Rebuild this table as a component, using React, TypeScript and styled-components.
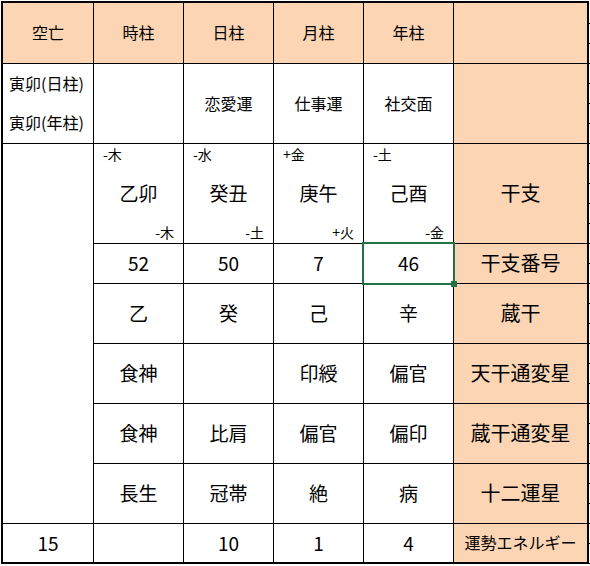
import React from 'react';
import styled, { createGlobalStyle } from 'styled-components';

const GlobalStyle = createGlobalStyle`
  html, body { margin: 0; padding: 0; background: #fff; }
  body {
    font-family: "Noto Sans CJK JP", "Noto Sans", sans-serif;
    color: #000;
  }
`;

const Page = styled.div`
  display: flex;
  align-items: flex-start;
  padding: 1px 0 0 1px;
`;

const Sheet = styled.div`
  display: grid;
  grid-template-columns: 90px 89px 89px 89px 89px 133px;
  grid-template-rows: 60px 79px 99px 39px 59px 59px 59px 59px 38px;
  gap: 1px;
  background: #000;
  border: 2px solid #000;
`;

const EdgeTicks = styled.div`
  width: 1px;
  align-self: stretch;
  background: repeating-linear-gradient(
    to bottom,
    transparent 0 19px,
    #000 19px 20px
  );
  background-position: 0 3px;
`;

const Cell = styled.div<{ $accent?: boolean; $size?: number; $span?: number; $selected?: boolean }>`
  display: flex;
  align-items: center;
  justify-content: center;
  padding-bottom: 2px;
  background: ${p => (p.$accent ? '#fcd5b4' : '#fff')};
  font-size: ${p => p.$size ?? 19}px;
  line-height: 1;
  white-space: nowrap;
  ${p => (p.$span ? `grid-row: span ${p.$span};` : '')}
  ${p =>
    p.$selected
      ? `
    position: relative;
    &::after {
      content: '';
      position: absolute;
      inset: -2px;
      border: 2px solid #217346;
      z-index: 1;
    }
    &::before {
      content: '';
      position: absolute;
      right: -4px;
      bottom: -4px;
      width: 6px;
      height: 6px;
      background: #217346;
      z-index: 2;
    }
  `
      : ''}
`;

const NoteCell = styled.div`
  display: flex;
  flex-direction: column;
  justify-content: center;
  align-items: flex-start;
  padding: 0 0 2px 6px;
  background: #fff;
  font-size: 16px;
  line-height: 39px;
  white-space: nowrap;
`;

const PillarCell = styled.div`
  display: flex;
  flex-direction: column;
  justify-content: space-between;
  padding: 0 9px 1px;
  background: #fff;
`;

const Tag = styled.span<{ $end?: boolean }>`
  align-self: ${p => (p.$end ? 'flex-end' : 'flex-start')};
  font-size: 14px;
  line-height: 20px;
`;

const Kanshi = styled.span`
  align-self: center;
  font-size: 19px;
  line-height: 1;
  padding-bottom: 2px;
`;

type Pillar = {
  name: string;
  luck: string;
  kanshi: string;
  top: string;
  bottom: string;
  no: string;
  zokan: string;
  tenkan: string;
  zokanStar: string;
  unsei: string;
  energy: string;
};

const pillars: Pillar[] = [
  { name: '時柱', luck: '', kanshi: '乙卯', top: '-木', bottom: '-木', no: '52', zokan: '乙', tenkan: '食神', zokanStar: '食神', unsei: '長生', energy: '' },
  { name: '日柱', luck: '恋愛運', kanshi: '癸丑', top: '-水', bottom: '-土', no: '50', zokan: '癸', tenkan: '', zokanStar: '比肩', unsei: '冠帯', energy: '10' },
  { name: '月柱', luck: '仕事運', kanshi: '庚午', top: '+金', bottom: '+火', no: '7', zokan: '己', tenkan: '印綬', zokanStar: '偏官', unsei: '絶', energy: '1' },
  { name: '年柱', luck: '社交面', kanshi: '己酉', top: '-土', bottom: '-金', no: '46', zokan: '辛', tenkan: '偏官', zokanStar: '偏印', unsei: '病', energy: '4' },
];

const simpleRows: { key: keyof Pillar; label: string; selectedIndex?: number }[] = [
  { key: 'no', label: '干支番号', selectedIndex: 3 },
  { key: 'zokan', label: '蔵干' },
  { key: 'tenkan', label: '天干通変星' },
  { key: 'zokanStar', label: '蔵干通変星' },
  { key: 'unsei', label: '十二運星' },
];

export default function App() {
  return (
    <>
      <GlobalStyle />
      <Page>
        <Sheet>
          <Cell $accent $size={16}>空亡</Cell>
          {pillars.map(p => (
            <Cell key={p.name} $accent $size={16}>{p.name}</Cell>
          ))}
          <Cell $accent />

          <NoteCell>
            <div>寅卯(日柱)</div>
            <div>寅卯(年柱)</div>
          </NoteCell>
          {pillars.map(p => (
            <Cell key={p.name} $size={16}>{p.luck}</Cell>
          ))}
          <Cell $accent />

          <Cell $span={6} />
          {pillars.map(p => (
            <PillarCell key={p.name}>
              <Tag>{p.top}</Tag>
              <Kanshi>{p.kanshi}</Kanshi>
              <Tag $end>{p.bottom}</Tag>
            </PillarCell>
          ))}
          <Cell $accent $size={20}>干支</Cell>

          {simpleRows.map(r => (
            <React.Fragment key={r.key}>
              {pillars.map((p, i) => (
                <Cell key={p.name} $selected={r.selectedIndex === i}>{p[r.key]}</Cell>
              ))}
              <Cell $accent $size={20}>{r.label}</Cell>
            </React.Fragment>
          ))}

          <Cell>15</Cell>
          {pillars.map(p => (
            <Cell key={p.name}>{p.energy}</Cell>
          ))}
          <Cell $accent $size={16}>運勢エネルギー</Cell>
        </Sheet>
        <EdgeTicks />
      </Page>
    </>
  );
}
